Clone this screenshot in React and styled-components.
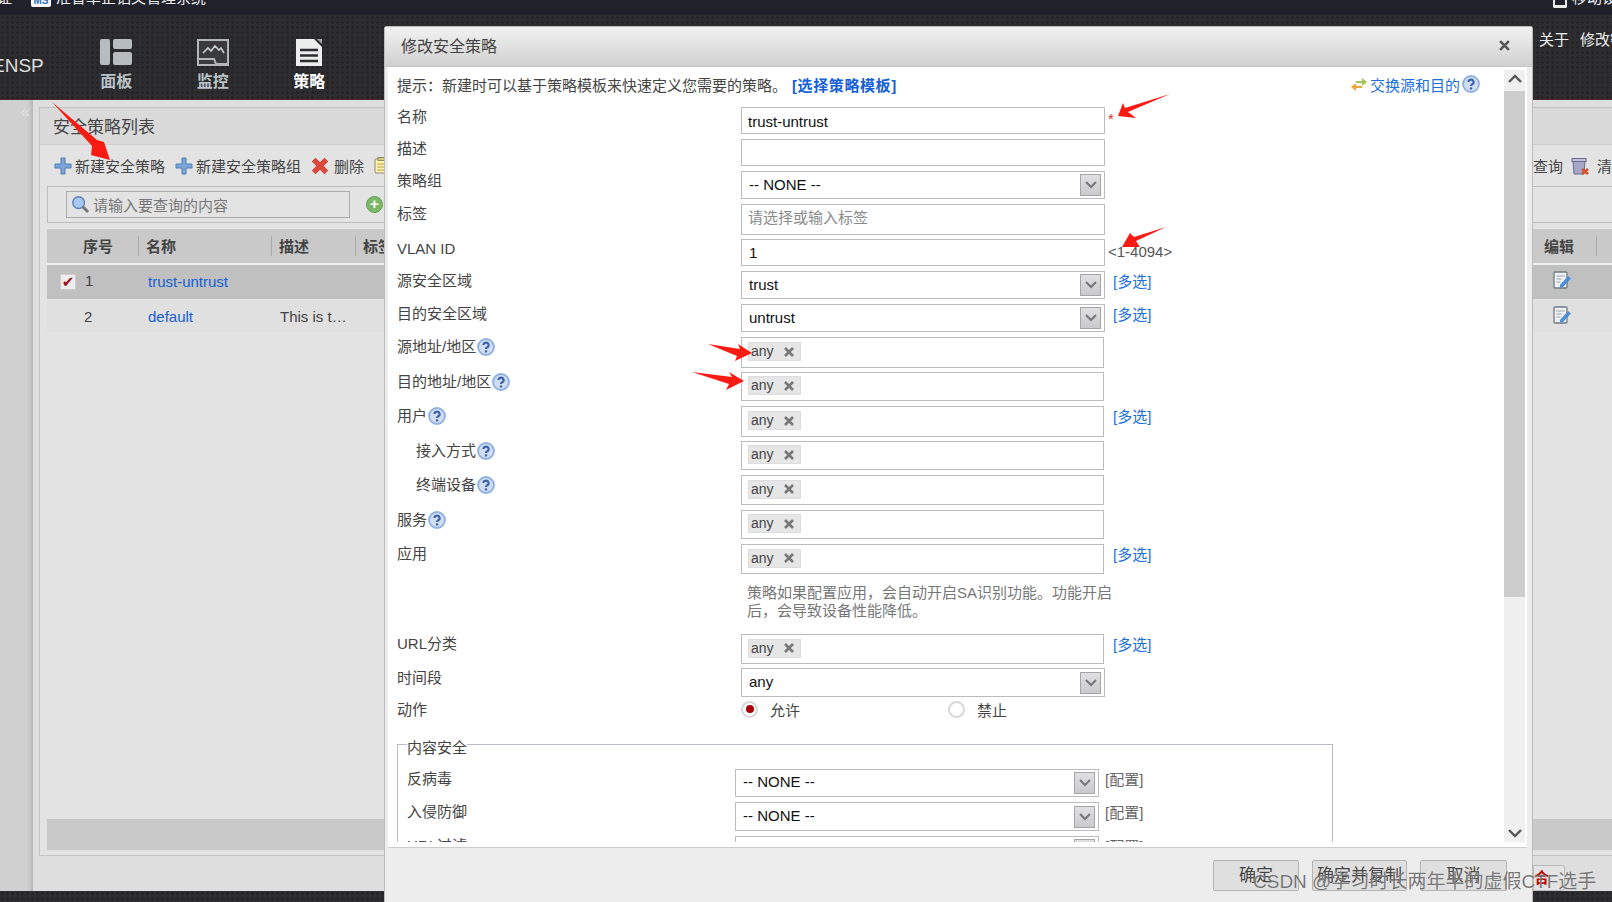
import React from "react";
import styled, { createGlobalStyle } from "styled-components";

const GlobalStyle = createGlobalStyle`
  html, body { margin: 0; padding: 0; background: #2b2b2d; }
  * { box-sizing: border-box; }
  body { font-family: "Liberation Sans", "Noto Sans CJK SC", sans-serif; font-size: 15px; color: #444; }
`;

const Page = styled.div`
  position: relative;
  width: 1612px;
  height: 902px;
  overflow: hidden;
  display: flex;
  flex-direction: column;
`;

const TopBar = styled.div`
  height: 15px;
  background: #20212b;
  flex: none;
  display: flex;
  justify-content: space-between;
  overflow: hidden;
  color: #eee;
  font-size: 15px;
  line-height: 15px;
`;

const TopBarGroup = styled.div`
  display: flex;
  align-items: flex-end;
  height: 5px;
  margin-left: ${(p) => p.$ml ?? 0}px;
  margin-right: ${(p) => p.$mr ?? 0}px;
  gap: ${(p) => p.$gap ?? 5}px;
`;

const MsBadge = styled.span`
  width: 20px;
  height: 7px;
  margin: 0 0 -2px 14px;
  overflow: hidden;
  background: #fff;
  color: #2a6fc0;
  font-size: 10px;
  font-weight: bold;
  line-height: 2px;
  border-radius: 0 0 2px 2px;
  text-align: center;
`;

const PhoneMark = styled.span`
  width: 14px;
  height: 8px;
  margin-bottom: -3px;
  background: #20212b;
  border: 2px solid #eee;
  border-top: none;
  border-bottom-width: 3px;
  border-radius: 0 0 2px 2px;
`;

const Header = styled.div`
  height: 85px;
  flex: none;
  display: flex;
  border-bottom: 1px solid #4a2a2a;
  background-color: #2d2d2f;
  background-image: radial-gradient(#232325 1.2px, transparent 1.4px);
  background-size: 5px 5px;
  color: #fff;
  position: relative;
`;

const Brand = styled.div`
  width: 76px;
  flex: none;
  margin-left: -8px;
  font-size: 19px;
  line-height: 20px;
  padding-top: 41px;
  color: #ddd;
`;

const NavItem = styled.div`
  width: 96.5px;
  flex: none;
  display: flex;
  flex-direction: column;
  align-items: center;
  padding-top: 24px;
  font-size: 16px;
  font-weight: bold;
  line-height: 18px;
  gap: 7px;
  color: ${(p) => (p.$active ? "#fff" : "#b9c2c9")};
`;

const NavIcon = styled.span`
  height: 27px;
  display: flex;
  align-items: flex-start;
`;

const HeaderLinks = styled.div`
  position: absolute;
  right: -28px;
  top: 16px;
  display: flex;
  gap: 11px;
  font-size: 15px;
  line-height: 18px;
  color: #eee;
`;

const Main = styled.div`
  flex: 1;
  display: flex;
  min-height: 0;
  background: #dedede;
`;

const SideRail = styled.div`
  width: 33px;
  flex: none;
  background: linear-gradient(90deg, #d0d0d0 80%, #c8c8c8 90%, #b6b6b6);
  color: #e2e2e2;
  font-size: 17px;
  line-height: 18px;
  text-align: right;
  padding: 3px 3px 0 0;
`;

const Panel = styled.div`
  flex: 1;
  min-width: 0;
  margin: 7px 0 0 6px;
  border: 1px solid #c4c4c4;
  border-right: none;
  background: #e3e3e3;
  height: 749px;
  display: flex;
  flex-direction: column;
`;

const PanelTitle = styled.div`
  height: 37px;
  flex: none;
  background: #dadada;
  border-bottom: 1px solid #cfcfcf;
  font-size: 17px;
  line-height: 39px;
  padding-left: 13px;
  color: #444;
`;

const Toolbar = styled.div`
  height: 41px;
  flex: none;
  display: flex;
  align-items: center;
  padding-left: 14px;
  font-size: 15px;
  color: #444;
`;

const ToolItem = styled.span`
  display: flex;
  align-items: center;
  gap: ${(p) => p.$inner ?? 3}px;
  margin-right: ${(p) => p.$gap ?? 10}px;
`;

const ToolbarRight = styled.div`
  margin-left: auto;
  display: flex;
  align-items: center;
  gap: 7px;
  margin-right: -15px;
  white-space: nowrap;
`;

const SearchBar = styled.div`
  height: 37px;
  flex: none;
  margin: 0 0 6px 7px;
  border: 1px solid #bdbdbd;
  border-right: none;
  display: flex;
  align-items: center;
  padding-left: 18px;
`;

const SearchBox = styled.div`
  width: 284px;
  height: 27px;
  border: 1px solid #aaa;
  display: flex;
  align-items: center;
  gap: 3px;
  padding: 0 0 1px 4px;
  color: #777;
  font-size: 15px;
`;

const AddRound = styled.span`
  margin-left: 16px;
  width: 17px;
  height: 17px;
  border-radius: 50%;
  background: #7db868;
  border: 1px solid #5f9f50;
  color: #fff;
  font: bold 15px/14px "Liberation Sans", sans-serif;
  text-align: center;
`;

const TableHead = styled.div`
  height: 36px;
  flex: none;
  margin-left: 7px;
  background: #c9c9c9;
  border-bottom: 2px solid #eee;
  display: flex;
  align-items: center;
  font-size: 15px;
  font-weight: bold;
  color: #444;
`;

const HeadCell = styled.span`
  width: ${(p) => p.$w}px;
  flex: none;
  height: 20px;
  line-height: 22px;
  padding-left: ${(p) => p.$pad ?? 7}px;
  border-right: 1px solid ${(p) => (p.$noLine ? "transparent" : "#aaa")};
`;

const TableRow = styled.div`
  height: ${(p) => (p.$selected ? 35 : 33)}px;
  flex: none;
  margin-left: 7px;
  padding-bottom: ${(p) => (p.$selected ? 2 : 0)}px;
  background: ${(p) => (p.$selected ? "#c0c0c1" : "#e0e0e0")};
  border-bottom: 1px solid #e4e4e4;
  display: flex;
  align-items: center;
  font-size: 15px;
  color: #444;
  position: relative;
`;

const Cell = styled.span`
  width: ${(p) => p.$w}px;
  flex: none;
  padding-left: ${(p) => p.$pad ?? 0}px;
`;

const TableLink = styled.span`
  color: #1560d8;
`;

const CheckBox = styled.span`
  display: inline-block;
  width: 16px;
  height: 16px;
  margin: 0 9px 0 13px;
  vertical-align: -1px;
  background: #eee;
  border: 1px solid #ccc;
  color: #a01020;
  font: bold 15px/14px "DejaVu Sans", sans-serif;
  text-align: center;
`;

const RowIcon = styled.span`
  position: absolute;
  right: 40px;
  top: 6px;
  display: flex;
`;

const GrayBar = styled.div`
  margin: auto 0 5px 7px;
  height: 31px;
  flex: none;
  background: #c9c9c9;
`;

const BottomStrip = styled.div`
  height: 11px;
  flex: none;
  background-color: #2d2d2f;
  background-image: radial-gradient(#232325 1.2px, transparent 1.4px);
  background-size: 5px 5px;
`;

const Modal = styled.div`
  position: absolute;
  left: 384px;
  top: 26px;
  width: 1149px;
  height: 876px;
  background: #ededed;
  border: 1px solid #bbb;
  border-bottom: none;
  border-radius: 3px 3px 0 0;
  display: flex;
  flex-direction: column;
`;

const ModalHead = styled.div`
  height: 40px;
  flex: none;
  background: linear-gradient(#f2f2f2, #d0d0d0);
  border-bottom: 1px solid #c6c6c6;
  display: flex;
  align-items: center;
  justify-content: space-between;
  padding: 0 22px 3px 16px;
  font-size: 16px;
  color: #444;
`;

const CloseMark = styled.span`
  display: flex;
`;

const ModalBody = styled.div`
  height: 781px;
  flex: none;
  margin: 0 5px 0 3px;
  background: #fff;
  border-bottom: 1px solid #ccc;
  display: flex;
  overflow: hidden;
`;

const FormArea = styled.div`
  flex: 1;
  min-width: 0;
  height: 775px;
  overflow: hidden;
  padding: 0 0 0 9px;
`;

const Tip = styled.div`
  height: 40px;
  display: flex;
  align-items: center;
  color: #444;
  font-size: 15px;
  padding-bottom: 6px;
`;

const TipLink = styled.span`
  color: #1560d8;
  font-weight: bold;
  margin-left: 5px;
  letter-spacing: 0.6px;
`;

const SwapLink = styled.span`
  margin-left: auto;
  margin-right: 24px;
  display: flex;
  align-items: center;
  color: #1a6fe0;
  gap: 2px;
`;

const Row = styled.div`
  display: flex;
  height: ${(p) => p.$h}px;
  margin-bottom: ${(p) => p.$mb ?? 5}px;
`;

const Label = styled.div`
  width: ${(p) => p.$w ?? 344}px;
  flex: none;
  padding-left: ${(p) => p.$indent ?? 0}px;
  padding-top: 1px;
  font-size: 15px;
  line-height: 18px;
  color: #444;
  display: flex;
  align-items: flex-start;
  gap: 1px;
`;

const Field = styled.div`
  width: ${(p) => p.$w ?? 364}px;
  flex: none;
  border: 1px solid #bcbcbc;
  display: flex;
  align-items: center;
  padding-left: ${(p) => p.$pad ?? 6}px;
  padding-top: ${(p) => p.$pt ?? 0}px;
  padding-bottom: ${(p) => p.$pb ?? 0}px;
  font-size: 15px;
  color: ${(p) => (p.$muted ? "#8a8a8a" : "#111")};
  background: #fff;
  position: relative;
`;

const Arrow = styled.span`
  position: absolute;
  right: 3px;
  top: 50%;
  margin-top: -11px;
  width: 21px;
  height: 22px;
  background: linear-gradient(#e0e0e2, #cacacd);
  border: 1px solid #a5a5a8;
  display: flex;
  align-items: center;
  justify-content: center;
`;

const Tag = styled.span`
  height: 19px;
  width: 53px;
  background: #e6e6e6;
  border: 1px solid #ddd;
  font-size: 14px;
  line-height: 17px;
  color: #444;
  padding: 0 6px 0 2px;
  display: flex;
  justify-content: space-between;
  align-items: center;
`;

const After = styled.span`
  margin-left: ${(p) => p.$ml ?? 8}px;
  font-size: 15px;
  color: ${(p) => p.$color ?? "#1a6fe0"};
  line-height: ${(p) => p.$lh ?? 22}px;
  white-space: nowrap;
`;

const Hint = styled.div`
  margin: 0 0 14px 350px;
  width: 366px;
  font-size: 15px;
  line-height: 18px;
  color: #777;
`;

const RadioRow = styled.div`
  display: flex;
  height: 18px;
  align-items: center;
  font-size: 15px;
  color: #444;
`;

const RadioDot = styled.span`
  width: 17px;
  height: 17px;
  border-radius: 50%;
  border: 2px solid #d8d8d8;
  background: #fff;
  margin-right: 12px;
  display: flex;
  align-items: center;
  justify-content: center;
  &::after {
    content: "";
    width: 8px;
    height: 8px;
    border-radius: 50%;
    background: ${(p) => (p.$on ? "#a80008" : "transparent")};
  }
`;

const RadioSlot = styled.span`
  width: ${(p) => p.$w}px;
  display: flex;
  align-items: center;
`;

const FieldSet = styled.fieldset`
  margin: 14px 0 0 0;
  padding: 13px 0 0 9px;
  width: 936px;
  height: 130px;
  border: 1px solid #b8bccb;
  border-bottom: none;
  min-inline-size: 0;
`;

const Legend = styled.legend`
  font-size: 15px;
  padding: 8px 0 0;
  color: #444;
  line-height: 16px;
`;

const ScrollTrack = styled.div`
  width: 21px;
  flex: none;
  margin: 3px 2px 0 0;
  background: #f0f0f0;
  display: flex;
  flex-direction: column;
  justify-content: space-between;
  height: 772px;
`;

const ScrollThumb = styled.div`
  height: 506px;
  background: #cdcdcd;
`;

const ScrollEnd = styled.span`
  display: flex;
  justify-content: center;
  align-items: center;
  height: 21px;
  padding-top: ${(p) => (p.$down ? 4 : 0)}px;
  padding-bottom: ${(p) => (p.$down ? 0 : 4)}px;
`;

const ModalFoot = styled.div`
  flex: 1;
  display: flex;
  justify-content: flex-end;
  gap: 13px;
  padding: 12px 25px 0 0;
`;

const FootButton = styled.div`
  width: ${(p) => p.$w}px;
  height: 31px;
  background: #dfdfdf;
  border: 1px solid #b5b5b5;
  border-radius: 2px;
  font-size: 17px;
  line-height: 29px;
  text-align: center;
  white-space: nowrap;
  color: #444;
`;

const Watermark = styled.div`
  position: absolute;
  left: 1253px;
  top: 871px;
  font-size: 19px;
  line-height: 22px;
  white-space: nowrap;
  color: rgba(100, 100, 100, 0.88);
  text-shadow: 0 0 1px rgba(255, 255, 255, 0.7);
`;

const RedArrow = styled.svg`
  position: absolute;
  left: ${(p) => p.$x}px;
  top: ${(p) => p.$y}px;
  overflow: visible;
  fill: #fa1a14;
`;

const OutsideButton = styled.span`
  position: absolute;
  left: 1533px;
  top: 865px;
  width: 32px;
  height: 26px;
  background: #e3e3e3;
  border: 1px solid #bbb;
  border-radius: 0 3px 3px 0;
  color: #b00;
  font-size: 15px;
  font-weight: bold;
  line-height: 24px;
  overflow: hidden;
`;

const Caret = ({ up }) => (
  <svg width="14" height="9" viewBox="0 0 14 9">
    <path d={up ? "M1 8 L7 2 L13 8" : "M1 1 L7 7 L13 1"} fill="none" stroke="#555" strokeWidth="2.4" />
  </svg>
);

const SelectCaret = () => (
  <svg width="12" height="8" viewBox="0 0 12 8">
    <path d="M1 1 L6 6 L11 1" fill="none" stroke="#777" strokeWidth="2" />
  </svg>
);

const Cross = ({ size = 10, color = "#777", w = 2.6 }) => (
  <svg width={size} height={size} viewBox="0 0 10 10">
    <path d="M1 1 L9 9 M9 1 L1 9" stroke={color} strokeWidth={w} />
  </svg>
);

const Help = () => (
  <svg width="18" height="18" viewBox="0 0 18 18">
    <circle cx="9" cy="9" r="8" fill="#cfdcf2" stroke="#8fb0e0" strokeWidth="1.8" />
    <path d="M6.4 7 a2.6 2.4 0 1 1 3.8 2.2 q-1.2 .6 -1.2 1.8" fill="none" stroke="#3a62a8" strokeWidth="2.1" />
    <circle cx="9" cy="13.4" r="1.2" fill="#3a62a8" />
  </svg>
);

const Plus = () => (
  <svg width="18" height="18" viewBox="0 0 18 18">
    <path d="M7 1 h4 v6 h6 v4 h-6 v6 h-4 v-6 h-6 v-4 h6 z" fill="#7ba6d6" stroke="#4f7fb5" strokeWidth="1" />
  </svg>
);

const NoteIcon = () => (
  <svg width="16" height="17" viewBox="0 0 16 17">
    <rect x="1" y="2" width="13" height="14" rx="1" fill="#fff3b5" stroke="#8d8a66" />
    <rect x="4" y="0.5" width="7" height="3" fill="#d8c978" stroke="#8d8a66" />
    <path d="M3 7 h9 M3 10 h9 M3 13 h9" stroke="#b9a040" />
  </svg>
);

const Magnifier = () => (
  <svg width="19" height="19" viewBox="0 0 20 20">
    <circle cx="8" cy="8" r="6.2" fill="#a9c7ef" stroke="#5d85bd" strokeWidth="1.5" />
    <path d="M12.5 12.5 L18 18" stroke="#777" strokeWidth="3" />
  </svg>
);

const EditIcon = () => (
  <svg width="19" height="19" viewBox="0 0 19 19">
    <rect x="1" y="1" width="13" height="16" rx="1" fill="#eef0f2" stroke="#707a85" strokeWidth="1.3" />
    <path d="M3.5 5 h8 M3.5 8 h5 M3.5 11 h4" stroke="#9aa5b0" />
    <path d="M7 14 L15 5 L18 7.5 L10 16 L7 17 z" fill="#4d8fd6" />
  </svg>
);

const TrashIcon = () => (
  <svg width="20" height="20" viewBox="0 0 20 20">
    <path d="M3 5 h12 l-1 13 h-10 z" fill="#a5a6c8" stroke="#6b6c8f" />
    <rect x="2" y="2.5" width="14" height="3" fill="#c0c1d8" stroke="#6b6c8f" />
    <path d="M12 13 l6 5 M18 13 l-6 5" stroke="#d9502e" strokeWidth="2.6" />
  </svg>
);

const SwapIcon = () => (
  <svg width="18" height="16" viewBox="0 0 18 16">
    <path d="M6 5 h6 v-3 l5 4 l-5 4 v-3 h-6 z" fill="#a3c45a" />
    <path d="M12 10 h-6 v-3 l-5 4 l5 4 v-3 h6 z" fill="#efa63d" />
  </svg>
);

const BoardIcon = () => (
  <svg width="32" height="26" viewBox="0 0 32 26">
    <rect x="0" y="0" width="10" height="26" rx="2" fill="#b7bcc1" />
    <rect x="13" y="0" width="19" height="10" rx="2" fill="#b7bcc1" />
    <rect x="13" y="13" width="19" height="13" rx="2" fill="#b7bcc1" />
  </svg>
);

const MonitorIcon = () => (
  <svg width="32" height="27" viewBox="0 0 32 27">
    <rect x="1" y="1" width="30" height="25" fill="#3a3a3c" stroke="#b2b7bb" strokeWidth="2" />
    <path d="M6 14 L11 9 L14 12 L18 7 L22 11 L24 9 L27 14" fill="none" stroke="#c8cdd0" strokeWidth="1.6" />
    <path d="M1 20 H17 L19 25 H31" fill="none" stroke="#b2b7bb" strokeWidth="2" />
  </svg>
);

const PolicyIcon = () => (
  <svg width="26" height="27" viewBox="0 0 26 27">
    <path d="M0 0 H18 L26 8 V27 H0 Z" fill="#eceded" />
    <path d="M21 0 H26 V5 Z" fill="#a8a8a8" />
    <path d="M4 11 H22 M4 16.5 H22 M4 22 H22" stroke="#2d2d2f" strokeWidth="2.4" />
  </svg>
);

const formRows = [
  { label: "名称", h: 27, mb: 5, value: "trust-untrust", pt: 1, after: <After $ml={3} $lh={24} $color="#f02020">*</After> },
  { label: "描述", h: 27, mb: 5, value: "" },
  { label: "策略组", h: 28, mb: 5, value: "-- NONE --", select: true },
  { label: "标签", h: 31, mb: 4, value: "请选择或输入标签", muted: true },
  { label: "VLAN ID", h: 27, mb: 5, value: "1", pad: 7, after: <After $ml={3} $lh={26} $color="#555">&lt;1-4094&gt;</After> },
  { label: "源安全区域", h: 28, mb: 5, value: "trust", select: true, multi: true },
  { label: "目的安全区域", h: 28, mb: 5, value: "untrust", select: true, multi: true },
  { label: "源地址/地区", h: 31, mb: 4, tag: true, help: true },
  { label: "目的地址/地区", h: 29, mb: 5, tag: true, help: true },
  { label: "用户", h: 31, mb: 4, tag: true, help: true, multi: true },
  { label: "接入方式", h: 29, mb: 5, tag: true, help: true, indent: 19 },
  { label: "终端设备", h: 30, mb: 5, tag: true, help: true, indent: 19 },
  { label: "服务", h: 29, mb: 5, tag: true, help: true },
  { label: "应用", h: 30, mb: 10, tag: true, multi: true },
];

const renderField = (r) => {
  if (r.tag) {
    return (
      <Field $w={363} $pad={6} $pb={2}>
        <Tag>
          any
          <Cross />
        </Tag>
      </Field>
    );
  }
  return (
    <Field $muted={r.muted} $pad={r.select ? 7 : r.pad} $pt={r.pt} $pb={r.muted ? 6 : r.select ? 2 : 0}>
      {r.value}
      {r.select && (
        <Arrow>
          <SelectCaret />
        </Arrow>
      )}
    </Field>
  );
};

const FormRow = ({ r }) => (
  <Row $h={r.h} $mb={r.mb}>
    <Label $indent={r.indent}>
      {r.label}
      {r.help && <Help />}
    </Label>
    {renderField(r)}
    {r.multi && <After $ml={r.tag ? 9 : 8}>[多选]</After>}
    {r.after}
  </Row>
);

const ContentRow = ({ label, h }) => (
  <Row $h={h} $mb={5}>
    <Label $w={328}>{label}</Label>
    <Field $w={364} $pad={7} $pb={3}>
      -- NONE --
      <Arrow>
        <SelectCaret />
      </Arrow>
    </Field>
    <After $ml={6} $color="#666">
      [配置]
    </After>
  </Row>
);

const arrows = [
  { x: 50, y: 100, w: 62, h: 62, d: "M2 2 L47 40 L54 42 L60 60 L41 55 L42 46 Z" },
  { x: 1118, y: 94, w: 52, h: 24, d: "M0 22 L5 9 L7 14 L52 0 L10 18 L18 24 Z" },
  { x: 1122, y: 227, w: 44, h: 22, d: "M0 20 L8 6 L12 10 L44 0 L14 14 L18 20 Z" },
  { x: 708, y: 344, w: 44, h: 18, d: "M0 0 L32 5 L30 0 L44 9 L27 17 L29 12 Z" },
  { x: 692, y: 372, w: 52, h: 18, d: "M0 0 L40 5 L37 0 L52 9 L34 18 L37 12 Z" },
];

export default function App() {
  return (
    <Page>
      <GlobalStyle />
      <TopBar>
        <TopBarGroup $ml={-3}>
          <span>证</span>
          <MsBadge>MS</MsBadge>
          <span>准智卓企铝又管理系统</span>
        </TopBarGroup>
        <TopBarGroup $mr={-20}>
          <PhoneMark />
          <span>移动设备</span>
        </TopBarGroup>
      </TopBar>
      <Header>
        <Brand>ENSP</Brand>
        <NavItem>
          <NavIcon>
            <BoardIcon />
          </NavIcon>
          面板
        </NavItem>
        <NavItem>
          <NavIcon>
            <MonitorIcon />
          </NavIcon>
          监控
        </NavItem>
        <NavItem $active>
          <NavIcon>
            <PolicyIcon />
          </NavIcon>
          策略
        </NavItem>
        <HeaderLinks>
          <span>关于</span>
          <span>修改密码</span>
        </HeaderLinks>
      </Header>
      <Main>
        <SideRail>«</SideRail>
        <Panel>
          <PanelTitle>安全策略列表</PanelTitle>
          <Toolbar>
            <ToolItem>
              <Plus />
              新建安全策略
            </ToolItem>
            <ToolItem $gap={11}>
              <Plus />
              新建安全策略组
            </ToolItem>
            <ToolItem $inner={6}>
              <Cross size={16} color="#d9483b" w={3.4} />
              删除
            </ToolItem>
            <NoteIcon />
            <ToolbarRight>
              <span>查询</span>
              <TrashIcon />
              <span>清除</span>
            </ToolbarRight>
          </Toolbar>
          <SearchBar>
            <SearchBox>
              <Magnifier />
              请输入要查询的内容
            </SearchBox>
            <AddRound>+</AddRound>
          </SearchBar>
          <TableHead>
            <HeadCell $w={92} $pad={36}>序号</HeadCell>
            <HeadCell $w={133}>名称</HeadCell>
            <HeadCell $w={84}>描述</HeadCell>
            <HeadCell $w={1188} $noLine>标签</HeadCell>
            <HeadCell $w={53} $pad={0}>编辑</HeadCell>
          </TableHead>
          <TableRow $selected>
            <Cell $w={101}>
              <CheckBox>✔</CheckBox>1
            </Cell>
            <Cell $w={132}>
              <TableLink>trust-untrust</TableLink>
            </Cell>
            <RowIcon>
              <EditIcon />
            </RowIcon>
          </TableRow>
          <TableRow>
            <Cell $w={101} $pad={37}>2</Cell>
            <Cell $w={132}>
              <TableLink>default</TableLink>
            </Cell>
            <Cell $w={90}>This is t…</Cell>
            <RowIcon>
              <EditIcon />
            </RowIcon>
          </TableRow>
          <GrayBar />
        </Panel>
      </Main>
      <BottomStrip />

      <Modal>
        <ModalHead>
          修改安全策略
          <CloseMark>
            <Cross size={11} color="#555" w={2.4} />
          </CloseMark>
        </ModalHead>
        <ModalBody>
          <FormArea>
            <Tip>
              提示：新建时可以基于策略模板来快速定义您需要的策略。
              <TipLink>[选择策略模板]</TipLink>
              <SwapLink>
                <SwapIcon />
                交换源和目的
                <Help />
              </SwapLink>
            </Tip>
            {formRows.map((r) => (
              <FormRow key={r.label} r={r} />
            ))}
            <Hint>策略如果配置应用，会自动开启SA识别功能。功能开启后，会导致设备性能降低。</Hint>
            <FormRow r={{ label: "URL分类", h: 30, mb: 4, tag: true, multi: true }} />
            <FormRow r={{ label: "时间段", h: 29, mb: 3, value: "any", select: true }} />
            <Row $h={18} $mb={0}>
              <Label>动作</Label>
              <RadioRow>
                <RadioSlot $w={207}>
                  <RadioDot $on />
                  允许
                </RadioSlot>
                <RadioSlot $w={100}>
                  <RadioDot />
                  禁止
                </RadioSlot>
              </RadioRow>
            </Row>
            <FieldSet>
              <Legend>内容安全</Legend>
              <ContentRow label="反病毒" h={28} />
              <ContentRow label="入侵防御" h={29} />
              <ContentRow label="URL过滤" h={28} />
            </FieldSet>
          </FormArea>
          <ScrollTrack>
            <div>
              <ScrollEnd>
                <Caret up />
              </ScrollEnd>
              <ScrollThumb />
            </div>
            <ScrollEnd $down>
              <Caret />
            </ScrollEnd>
          </ScrollTrack>
        </ModalBody>
        <ModalFoot>
          <FootButton $w={86}>确定</FootButton>
          <FootButton $w={95}>确定并复制</FootButton>
          <FootButton $w={87}>取消</FootButton>
        </ModalFoot>
      </Modal>

      <OutsideButton>合</OutsideButton>

      {arrows.map((a) => (
        <RedArrow key={a.x} $x={a.x} $y={a.y} width={a.w} height={a.h} viewBox={`0 0 ${a.w} ${a.h}`}>
          <path d={a.d} />
        </RedArrow>
      ))}

      <Watermark>CSDN @学习时长两年半的虚假CTF选手</Watermark>
    </Page>
  );
}
